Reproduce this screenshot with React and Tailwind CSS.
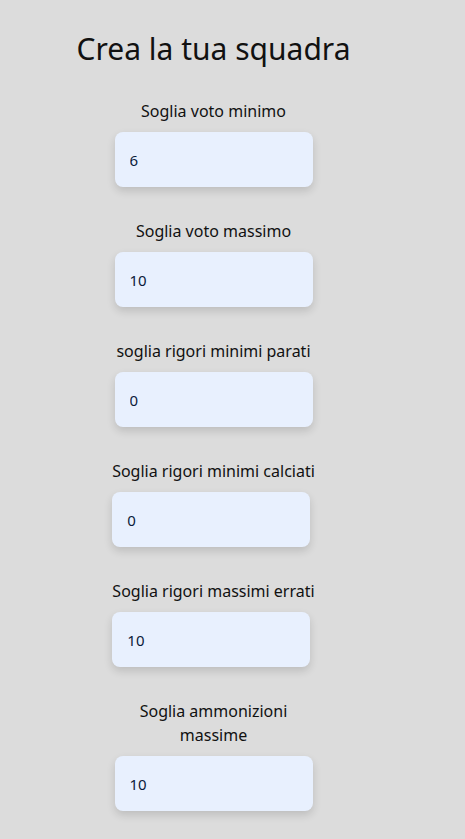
const fields = [
  { label: "Soglia voto minimo", value: "6" },
  { label: "Soglia voto massimo", value: "10" },
  { label: "soglia rigori minimi parati", value: "0" },
  { label: "Soglia rigori minimi calciati", value: "0" },
  { label: "Soglia rigori massimi errati", value: "10" },
  { label: "Soglia ammonizioni massime", value: "10", narrow: true },
];

function Field({ label, value, narrow }) {
  return (
    <div className="w-fit mb-8">
      <div
        className={`text-center text-[16px] leading-6 text-[#111] mb-[9px] ${narrow ? "max-w-[198px] mx-auto" : ""}`}
      >
        {label}
      </div>
      <input
        readOnly
        value={value}
        className="block w-[198px] h-[55px] rounded-lg bg-[#e8f0fe] px-[15px] text-[15px] text-[#0b1a3a] outline-none shadow-[0_4px_8px_rgba(0,0,0,0.14)]"
        style={{ fontFamily: "inherit" }}
      />
    </div>
  );
}

export default function App() {
  return (
    <div
      className="min-h-screen bg-[#dcdcdc] pb-6"
      style={{ fontFamily: "'Noto Sans', 'Open Sans', sans-serif" }}
    >
      <div className="w-[427px] flex flex-col items-center pt-[29px]">
        <h1 className="text-[30px] leading-10 text-[#111] mb-[30px]">
          Crea la tua squadra
        </h1>
        {fields.map((f) => (
          <Field key={f.label} {...f} />
        ))}
      </div>
    </div>
  );
}
